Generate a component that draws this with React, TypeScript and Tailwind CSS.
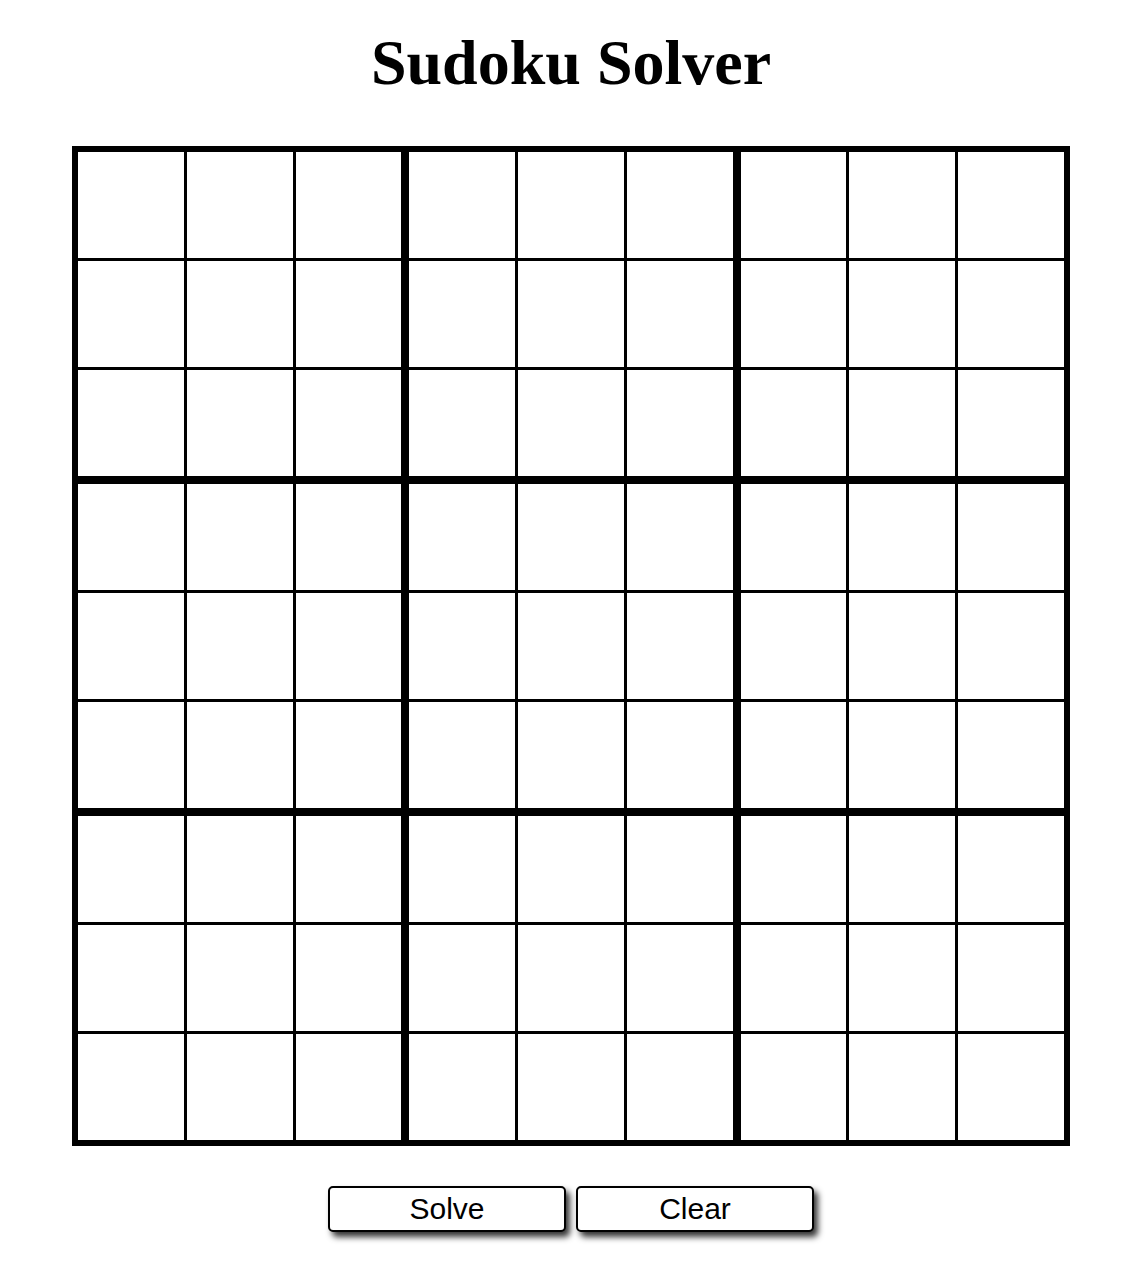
import React from "react";

const BLOCKS = Array.from({ length: 9 }, (_, i) => i);
const CELLS = Array.from({ length: 9 }, (_, i) => i);

function Block({ index }: { index: number }) {
  return (
    <div className="grid grid-cols-3 gap-[3px] bg-black">
      {CELLS.map(c => (
        <div key={`${index}-${c}`} className="h-[106px] bg-white" />
      ))}
    </div>
  );
}

export default function App() {
  return (
    <div className="min-h-[1282px] bg-white" style={{ fontFamily: '"Liberation Serif", serif' }}>
      <div className="ml-[72px] w-[998px] flex flex-col items-center">
        <h1 className="mt-[27px] text-[64px] leading-[71px] font-bold text-black" style={{ fontFamily: '"Liberation Serif", "Times New Roman", serif' }}>
          Sudoku Solver
        </h1>

        {/* board: 3x3 blocks, each 3x3 cells */}
        <div className="mt-[48px] w-[998px] border-[6px] border-black bg-black grid grid-cols-3 gap-[8px]">
          {BLOCKS.map(b => <Block key={b} index={b} />)}
        </div>

        <div className="mt-[40px] flex gap-[10px]" style={{ fontFamily: '"Liberation Sans", Arial, sans-serif' }}>
          <button className="w-[238px] h-[46px] bg-white border-2 border-black rounded-[5px] text-[30px] leading-none text-black shadow-[4px_5px_6px_rgba(0,0,0,0.8)]">
            Solve
          </button>
          <button className="w-[238px] h-[46px] bg-white border-2 border-black rounded-[5px] text-[30px] leading-none text-black shadow-[4px_5px_6px_rgba(0,0,0,0.8)]">
            Clear
          </button>
        </div>
      </div>
    </div>
  );
}
